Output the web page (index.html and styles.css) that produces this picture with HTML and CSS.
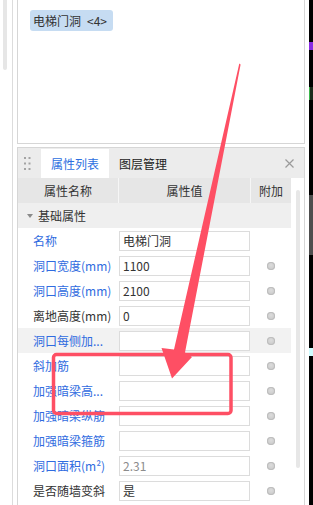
FILE: index.html
```html
<!DOCTYPE html>
<html lang="zh-CN">
<head>
    <meta charset="UTF-8">
    <meta name="viewport" content="width=device-width, initial-scale=1.0">
    <title>属性列表</title>
    <link rel="stylesheet" href="styles.css">
</head>
<body>
    <div class="gutter">
        <div class="gutter-bar"></div>
        <div class="gutter-line"></div>
    </div>

    <div class="main">
        <div class="preview">
            <span class="tag">电梯门洞<span class="tag-count">&lt;4&gt;</span></span>
        </div>

        <div class="props">
            <div class="tabbar">
                <svg class="grip" width="7" height="14" viewBox="0 0 7 14">
                    <rect x="0" y="0" width="2" height="2"/><rect x="4.5" y="0" width="2" height="2"/>
                    <rect x="0" y="5.5" width="2" height="2"/><rect x="4.5" y="5.5" width="2" height="2"/>
                    <rect x="0" y="11" width="2" height="2"/><rect x="4.5" y="11" width="2" height="2"/>
                </svg>
                <div class="tab active">属性列表</div>
                <div class="tab">图层管理</div>
                <svg class="close" width="9" height="9" viewBox="0 0 9 9">
                    <path d="M0.5 0.5 L8.5 8.5 M8.5 0.5 L0.5 8.5"/>
                </svg>
            </div>

            <div class="props-body">
                <div class="grid">
                    <div class="row head">
                        <div class="cell">属性名称</div>
                        <div class="cell">属性值</div>
                        <div class="cell">附加</div>
                    </div>
                    <div class="section"><span class="caret"></span>基础属性</div>

                    <div class="row">
                        <div class="label blue">名称</div>
                        <div class="value"><div class="box">电梯门洞</div></div>
                        <div class="extra"></div>
                    </div>
                    <div class="row">
                        <div class="label blue">洞口宽度(mm)</div>
                        <div class="value"><div class="box">1100</div></div>
                        <div class="extra"><span class="dot"></span></div>
                    </div>
                    <div class="row">
                        <div class="label blue">洞口高度(mm)</div>
                        <div class="value"><div class="box">2100</div></div>
                        <div class="extra"><span class="dot"></span></div>
                    </div>
                    <div class="row">
                        <div class="label">离地高度(mm)</div>
                        <div class="value"><div class="box">0</div></div>
                        <div class="extra"><span class="dot"></span></div>
                    </div>
                    <div class="row hover">
                        <div class="label blue">洞口每侧加...</div>
                        <div class="value"><div class="box"></div></div>
                        <div class="extra"><span class="dot"></span></div>
                    </div>
                    <div class="row">
                        <div class="label blue">斜加筋</div>
                        <div class="value"><div class="box"></div></div>
                        <div class="extra"><span class="dot"></span></div>
                    </div>
                    <div class="row">
                        <div class="label blue">加强暗梁高...</div>
                        <div class="value"><div class="box"></div></div>
                        <div class="extra"><span class="dot"></span></div>
                    </div>
                    <div class="row">
                        <div class="label blue">加强暗梁纵筋</div>
                        <div class="value"><div class="box"></div></div>
                        <div class="extra"><span class="dot"></span></div>
                    </div>
                    <div class="row">
                        <div class="label blue">加强暗梁箍筋</div>
                        <div class="value"><div class="box"></div></div>
                        <div class="extra"><span class="dot"></span></div>
                    </div>
                    <div class="row">
                        <div class="label blue">洞口面积(m²)</div>
                        <div class="value"><div class="box muted">2.31</div></div>
                        <div class="extra"><span class="dot"></span></div>
                    </div>
                    <div class="row">
                        <div class="label">是否随墙变斜</div>
                        <div class="value"><div class="box">是</div></div>
                        <div class="extra"><span class="dot"></span></div>
                    </div>
                </div>
                <div class="scroll-col">
                    <div class="scroll-track"></div>
                </div>
            </div>
        </div>
    </div>

    <div class="edge-gap"></div>
    <div class="edge">
        <div class="edge-purple"></div>
        <div class="edge-green"></div>
        <div class="edge-gray"></div>
        <div class="edge-cyan"></div>
    </div>

    <!-- red annotation drawn over the panel -->
    <svg class="annot" width="313" height="505" viewBox="0 0 313 505">
        <rect x="53.5" y="354.5" width="177.5" height="59" rx="3" ry="3" fill="none" stroke="#fe4f64" stroke-width="3.5"/>
        <polygon points="239.3,63.5 240.6,64.5 185,352.5 192,357 172,378.5 161.5,348 174,349.5" fill="#fe4f64"/>
    </svg>
</body>
</html>
```

FILE: styles.css
```css
body {
    margin: 0;
    width: 313px;
    height: 505px;
    overflow: hidden;
    display: flex;
    position: relative;
    background-color: #fff;
    font-family: "Noto Sans CJK SC", "Noto Sans", sans-serif;
    font-size: 12px;
    color: #333;
}
.gutter {
    width: 17px;
    flex: none;
    display: flex;
    align-items: flex-start;
}
.gutter-bar {
    width: 4px;
    height: 70px;
    margin-left: 3px;
    background-color: #e6e6e6;
    border-radius: 0 0 2px 2px;
}
.gutter-line {
    width: 1px;
    margin-left: 5px;
    align-self: stretch;
    background-color: #dcdcdc;
}
.main {
    width: 288px;
    flex: none;
    display: flex;
    flex-direction: column;
}
.preview {
    height: 143px;
    border: 1px solid #d6d6d6;
    border-top: none;
}
.tag {
    display: inline-flex;
    align-items: center;
    height: 21px;
    margin: 10px 0 0 12px;
    padding: 0 6px 0 3px;
    background-color: #c6dcf2;
    border-radius: 3px;
    line-height: 1;
}
.tag-count {
    margin-left: 6px;
}
.props {
    margin-top: 3px;
    flex: 1;
    border: 1px solid #d6d6d6;
    border-bottom: none;
    display: flex;
    flex-direction: column;
}
.tabbar {
    height: 30px;
    flex: none;
    display: flex;
    align-items: flex-end;
    background-color: #ececec;
}
.grip {
    align-self: center;
    margin: 1px 10px 0 6px;
    fill: #a3a3a3;
}
.tab {
    width: 68px;
    height: 29px;
    display: flex;
    align-items: center;
    justify-content: center;
    color: #222;
}
.tab.active {
    background-color: #fff;
    color: #2d6fe0;
}
.close {
    align-self: center;
    margin: 1px 10px 0 auto;
    stroke: #9a9a9a;
    stroke-width: 1.2;
}
.props-body {
    flex: 1;
    display: flex;
}
.grid {
    width: 273px;
    flex: none;
}
.row {
    height: 25px;
    display: grid;
    grid-template-columns: 100px 132px 41px;
    align-items: center;
}
.row.head {
    background-color: #e6e6e6;
    align-items: stretch;
}
.row.head .cell {
    display: flex;
    align-items: center;
    justify-content: center;
}
.row.head .cell + .cell {
    border-left: 1px solid #f6f6f6;
}
.section {
    height: 25px;
    display: flex;
    align-items: center;
    padding-left: 9px;
    background-color: #efefef;
}
.caret {
    width: 0;
    height: 0;
    margin-right: 5px;
    border-left: 3px solid transparent;
    border-right: 3px solid transparent;
    border-top: 4px solid #8a8a8a;
}
.label {
    padding-left: 15px;
    white-space: nowrap;
    color: #333;
}
.label.blue {
    color: #2f6be0;
}
.row.hover {
    background-color: #f2f2f2;
}
.value {
    padding-left: 1px;
}
.box {
    height: 20px;
    box-sizing: border-box;
    border: 1px solid #dcdcdc;
    background-color: #fff;
    padding-left: 3px;
    line-height: 18px;
}
.box.muted {
    color: #8c8c8c;
}
.extra {
    display: flex;
    justify-content: center;
}
.dot {
    width: 8px;
    height: 8px;
    margin-left: 1px;
    border-radius: 50%;
    background: radial-gradient(circle at 50% 40%, #dcdcdc, #c4c4c4);
    box-shadow: inset 0 0 0 1px #bdbdbd;
}
.scroll-col {
    flex: 1;
}
.scroll-track {
    width: 4px;
    height: 278px;
    margin: 12px 0 0 5px;
    background-color: #e7e7e7;
    border-radius: 2px;
}
.edge-gap {
    width: 4px;
    flex: none;
}
.edge {
    width: 4px;
    flex: none;
    background-color: #000;
    display: flex;
    flex-direction: column;
}
.edge-purple {
    height: 8px;
    margin-top: 42px;
    background-color: #8a2be2;
}
.edge-green {
    height: 13px;
    margin-top: 37px;
    border-left: 1px solid #3cb44b;
    background-color: #1b2a1b;
}
.edge-gray {
    height: 60px;
    margin-top: 95px;
    background-color: #4e4e4e;
}
.edge-cyan {
    height: 8px;
    margin-top: 93px;
    background-color: #cffcff;
}
.annot {
    position: absolute;
    top: 0;
    left: 0;
    pointer-events: none;
}
```
